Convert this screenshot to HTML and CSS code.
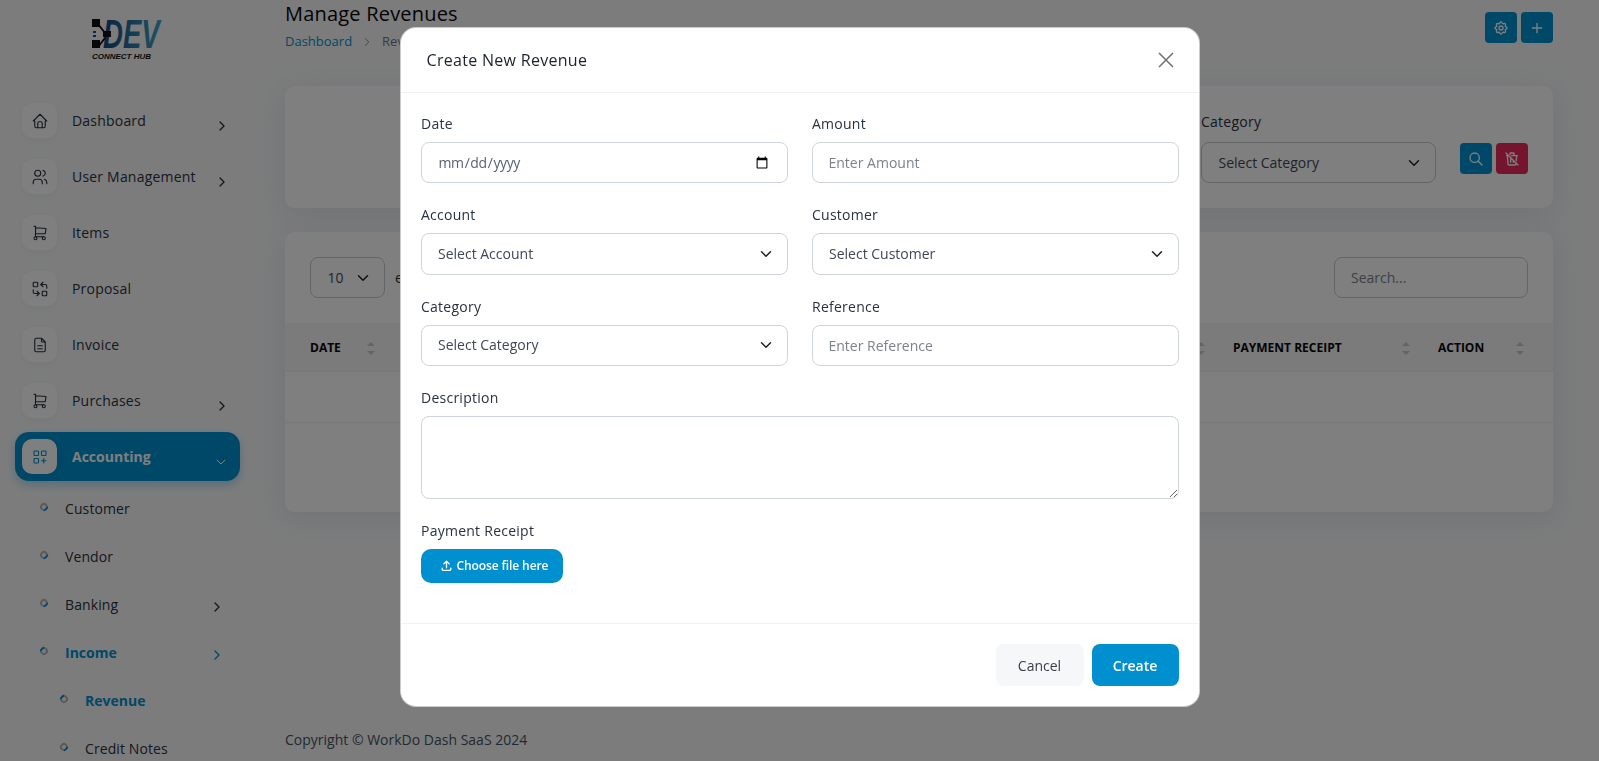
FILE: index.html
```html
<!DOCTYPE html>
<html lang="en">
<head>
    <meta charset="UTF-8">
    <meta name="viewport" content="width=device-width, initial-scale=1.0">
    <title>Manage Revenues</title>
    <link rel="stylesheet" href="styles.css">
</head>
<body>
    <div class="app">
        <aside class="sidebar">
            <div class="logo">
                <svg width="84" height="54" viewBox="0 -8 84 54">
                    <defs>
                        <linearGradient id="logo-grad" x1="0" x2="1" y1="0" y2="0">
                            <stop offset="0" stop-color="#17467f" />
                            <stop offset="1" stop-color="#3fa7c9" />
                        </linearGradient>
                    </defs>
                    <text class="logo-mark" transform="translate(11 30) scale(0.69 1)" fill="url(#logo-grad)">DEV</text>
                    <path class="logo-link" d="M6 6l7 9M6 29l7 -9" />
                    <rect class="logo-block" x="0" y="1" width="8" height="8" />
                    <rect class="logo-block" x="0" y="22" width="8" height="8" />
                    <rect class="logo-block" x="11" y="13" width="8" height="6" />
                    <rect x="1" y="13" width="3" height="2" fill="#1c4f8a" />
                    <rect x="1" y="17" width="3" height="2" fill="#1c4f8a" />
                    <text class="logo-sub" x="0" y="41" textLength="59" lengthAdjust="spacingAndGlyphs">CONNECT HUB</text>
                </svg>
            </div>
            <nav class="menu">
                <a class="menu-item">
                    <span class="tile"><svg class="icon" viewBox="0 0 24 24"><path d="M5 12l-2 0l9 -9l9 9l-2 0M5 12v7a2 2 0 0 0 2 2h10a2 2 0 0 0 2 -2v-7M9 21v-6a2 2 0 0 1 2 -2h2a2 2 0 0 1 2 2v6" /></svg></span>
                    <span class="menu-text">Dashboard</span>
                    <svg class="chev" viewBox="0 0 24 24"><path d="M9 6l6 6l-6 6" /></svg>
                </a>
                <a class="menu-item">
                    <span class="tile"><svg class="icon" viewBox="0 0 24 24"><circle cx="9" cy="7" r="4" /><path d="M3 21v-2a4 4 0 0 1 4 -4h4a4 4 0 0 1 4 4v2M16 3.13a4 4 0 0 1 0 7.75M21 21v-2a4 4 0 0 0 -3 -3.85" /></svg></span>
                    <span class="menu-text">User Management</span>
                    <svg class="chev" viewBox="0 0 24 24"><path d="M9 6l6 6l-6 6" /></svg>
                </a>
                <a class="menu-item">
                    <span class="tile"><svg class="icon" viewBox="0 0 24 24"><circle cx="6" cy="19" r="2" /><circle cx="17" cy="19" r="2" /><path d="M17 17h-11v-14h-2M6 5l14 1l-1 7h-13" /></svg></span>
                    <span class="menu-text">Items</span>
                </a>
                <a class="menu-item">
                    <span class="tile"><svg class="icon" viewBox="0 0 24 24"><rect x="3" y="3" width="6" height="6" rx="1" /><rect x="15" y="15" width="6" height="6" rx="1" /><path d="M21 11v-3a2 2 0 0 0 -2 -2h-6l3 3m0 -6l-3 3M3 13v3a2 2 0 0 0 2 2h6l-3 -3m0 6l3 -3" /></svg></span>
                    <span class="menu-text">Proposal</span>
                </a>
                <a class="menu-item">
                    <span class="tile"><svg class="icon" viewBox="0 0 24 24"><path d="M14 3v4a1 1 0 0 0 1 1h4M17 21h-10a2 2 0 0 1 -2 -2v-14a2 2 0 0 1 2 -2h7l5 5v11a2 2 0 0 1 -2 2zM9 13h6M9 17h6" /></svg></span>
                    <span class="menu-text">Invoice</span>
                </a>
                <a class="menu-item">
                    <span class="tile"><svg class="icon" viewBox="0 0 24 24"><circle cx="6" cy="19" r="2" /><circle cx="17" cy="19" r="2" /><path d="M17 17h-11v-14h-2M6 5l14 1l-1 7h-13" /></svg></span>
                    <span class="menu-text">Purchases</span>
                    <svg class="chev" viewBox="0 0 24 24"><path d="M9 6l6 6l-6 6" /></svg>
                </a>
                <a class="menu-item active">
                    <span class="tile"><svg class="icon" viewBox="0 0 24 24"><rect x="4" y="4" width="6" height="6" rx="1" /><rect x="14" y="4" width="6" height="6" rx="1" /><rect x="4" y="14" width="6" height="6" rx="1" /><path d="M14 17h6m-3 -3v6" /></svg></span>
                    <span class="menu-text">Accounting</span>
                    <svg class="chev" viewBox="0 0 24 24"><path d="M6 9l6 6l6 -6" /></svg>
                </a>
            </nav>
            <ul class="submenu">
                <li class="sub-item"><span class="dot"></span>Customer</li>
                <li class="sub-item"><span class="dot"></span>Vendor</li>
                <li class="sub-item"><span class="dot"></span>Banking<svg class="chev" viewBox="0 0 24 24"><path d="M9 6l6 6l-6 6" /></svg></li>
                <li class="sub-item current"><span class="dot"></span>Income<svg class="chev" viewBox="0 0 24 24"><path d="M9 6l6 6l-6 6" /></svg></li>
                <li class="sub-item nested current"><span class="dot"></span>Revenue</li>
                <li class="sub-item nested"><span class="dot"></span>Credit Notes</li>
            </ul>
        </aside>

        <main class="content">
            <header class="page-head">
                <div>
                    <h1 class="page-title">Manage Revenues</h1>
                    <div class="crumbs">
                        <a class="crumb-link">Dashboard</a>
                        <svg class="crumb-sep" viewBox="0 0 24 24"><path d="M9 6l6 6l-6 6" /></svg>
                        <span>Revenue</span>
                    </div>
                </div>
                <div class="head-actions">
                    <button class="btn-sm primary"><svg class="icon" viewBox="0 0 24 24"><path d="M10.325 4.317c.426 -1.756 2.924 -1.756 3.35 0a1.724 1.724 0 0 0 2.573 1.066c1.543 -.94 3.31 .826 2.37 2.37a1.724 1.724 0 0 0 1.065 2.572c1.756 .426 1.756 2.924 0 3.35a1.724 1.724 0 0 0 -1.066 2.573c.94 1.543 -.826 3.31 -2.37 2.37a1.724 1.724 0 0 0 -2.572 1.065c-.426 1.756 -2.924 1.756 -3.35 0a1.724 1.724 0 0 0 -2.573 -1.066c-1.543 .94 -3.31 -.826 -2.37 -2.37a1.724 1.724 0 0 0 -1.065 -2.572c-1.756 -.426 -1.756 -2.924 0 -3.35a1.724 1.724 0 0 0 1.066 -2.573c-.94 -1.543 .826 -3.31 2.37 -2.37c1 .608 2.296 .07 2.572 -1.065z" /><circle cx="12" cy="12" r="3" /></svg></button>
                    <button class="btn-sm primary"><svg class="icon" viewBox="0 0 24 24"><path d="M12 5v14M5 12h14" /></svg></button>
                </div>
            </header>

            <section class="card filter-card">
                <div class="field filter-field">
                    <label class="filter-label">Category</label>
                    <select class="control dim-control"><option>Select Category</option></select>
                </div>
                <div class="filter-actions">
                    <button class="btn-sm primary"><svg class="icon" viewBox="0 0 24 24"><circle cx="10" cy="10" r="7" /><path d="M21 21l-6 -6" /></svg></button>
                    <button class="btn-sm danger"><svg class="icon" viewBox="0 0 24 24"><path d="M3 3l18 18M4 7h3m4 0h9M10 11l0 6M14 14l0 3M5 7l1 12a2 2 0 0 0 2 2h8a2 2 0 0 0 2 -2l.077 -.923M18.384 14.373l.616 -7.373M9 5v-1a1 1 0 0 1 1 -1h4a1 1 0 0 1 1 1v3" /></svg></button>
                </div>
            </section>

            <section class="card table-card">
                <div class="table-top">
                    <div class="per-page">
                        <select class="control dim-control per-select"><option>10</option></select>
                        <span class="per-text">entries per page</span>
                    </div>
                    <input class="control dim-control search" placeholder="Search...">
                </div>
                <table class="data-table">
                    <thead>
                        <tr>
                            <th class="col-date"><div class="th-in">Date<span class="sort"></span></div></th>
                            <th><div class="th-in">Amount<span class="sort"></span></div></th>
                            <th><div class="th-in">Account<span class="sort"></span></div></th>
                            <th><div class="th-in">Customer<span class="sort"></span></div></th>
                            <th><div class="th-in">Category<span class="sort"></span></div></th>
                            <th><div class="th-in">Reference<span class="sort"></span></div></th>
                            <th><div class="th-in">Description<span class="sort"></span></div></th>
                            <th class="col-receipt"><div class="th-in">Payment Receipt<span class="sort"></span></div></th>
                            <th class="col-action"><div class="th-in">Action<span class="sort"></span></div></th>
                        </tr>
                    </thead>
                    <tbody>
                        <tr><td colspan="9">No entries found</td></tr>
                    </tbody>
                </table>
            </section>

            <footer class="copyright">Copyright © WorkDo Dash SaaS 2024</footer>
        </main>
    </div>

    <div class="backdrop">
        <div class="modal">
            <div class="modal-head">
                <h5 class="modal-title">Create New Revenue</h5>
                <svg class="close" viewBox="0 0 16 16"><path d="M1 1l14 14M15 1l-14 14" /></svg>
            </div>
            <div class="modal-body">
                <div class="field">
                    <label>Date</label>
                    <input class="control date" type="date">
                </div>
                <div class="field">
                    <label>Amount</label>
                    <input class="control" placeholder="Enter Amount">
                </div>
                <div class="field">
                    <label>Account</label>
                    <select class="control"><option>Select Account</option></select>
                </div>
                <div class="field">
                    <label>Customer</label>
                    <select class="control"><option>Select Customer</option></select>
                </div>
                <div class="field">
                    <label>Category</label>
                    <select class="control"><option>Select Category</option></select>
                </div>
                <div class="field">
                    <label>Reference</label>
                    <input class="control" placeholder="Enter Reference">
                </div>
                <div class="field wide">
                    <label>Description</label>
                    <textarea class="control area"></textarea>
                </div>
                <div class="field wide">
                    <label>Payment Receipt</label>
                    <button class="upload">
                        <svg class="upload-icon" viewBox="0 0 24 24"><path d="M4 17v2a2 2 0 0 0 2 2h12a2 2 0 0 0 2 -2v-2M7 9l5 -5l5 5M12 4v12" /></svg>
                        Choose file here
                    </button>
                </div>
            </div>
            <div class="modal-foot">
                <button class="btn btn-light">Cancel</button>
                <button class="btn btn-primary">Create</button>
            </div>
        </div>
    </div>
</body>
</html>
```

FILE: styles.css
```css
* {
    box-sizing: border-box;
}
body {
    margin: 0;
    height: 761px;
    overflow: hidden;
    font-family: 'Open Sans', sans-serif;
    font-size: 14px;
    line-height: 21px;
    color: #293240;
    background: #f8f9fa;
}
.app {
    display: flex;
    height: 761px;
}
svg {
    fill: none;
    stroke: currentColor;
    stroke-width: 1.5;
    stroke-linecap: round;
    stroke-linejoin: round;
}
.icon {
    width: 18px;
    height: 18px;
}

/* sidebar */
.sidebar {
    width: 255px;
    flex-shrink: 0;
    overflow: hidden;
}
.logo {
    height: 96px;
    padding: 10px 0 0 92px;
}
.logo svg {
    stroke: none;
    display: block;
}
.logo-mark {
    font-family: 'Liberation Sans', sans-serif;
    font-style: italic;
    font-weight: 700;
    font-size: 40px;
}
.logo-block {
    fill: #111;
}
.logo-link {
    stroke: #111;
    stroke-width: 2;
}
.logo-sub {
    font-family: 'Liberation Sans', sans-serif;
    font-style: italic;
    font-weight: 700;
    font-size: 8px;
    fill: #111;
}
.menu {
    display: flex;
    flex-direction: column;
    gap: 7px;
    margin-left: 15px;
    width: 225px;
}
.menu-item {
    display: flex;
    align-items: center;
    height: 49px;
    padding: 0 7px;
    gap: 15px;
    border-radius: 14px;
    font-weight: 500;
    letter-spacing: 0.2px;
    color: #293240;
}
.tile {
    width: 35px;
    height: 35px;
    flex-shrink: 0;
    display: flex;
    align-items: center;
    justify-content: center;
    background: #fff;
    border-radius: 10px;
    box-shadow: 0 2px 8px rgba(0, 0, 0, 0.05);
}
.menu-text {
    flex: 1;
}
.chev {
    width: 16px;
    height: 16px;
    margin: 10px 3px 0 0;
    stroke-width: 2;
}
.menu-item.active {
    background: #0090cf;
    color: #fff;
    font-weight: 700;
    letter-spacing: 0;
    box-shadow: 0 4px 10px rgba(0, 144, 207, 0.3);
}
.menu-item.active .tile {
    color: #0090cf;
}
.menu-item.active .chev {
    stroke-width: 1.5;
    margin-right: 4px;
}
.submenu {
    list-style: none;
    margin: 3px 0 0;
    padding: 0;
}
.sub-item {
    display: flex;
    align-items: center;
    height: 48px;
    padding: 0 30px 0 40px;
    gap: 17px;
    letter-spacing: 0.1px;
}
.sub-item .chev {
    margin: 6px 0 0 auto;
}
.sub-item.nested {
    padding-left: 60px;
}
.sub-item.current {
    color: #0090cf;
    font-weight: 700;
    letter-spacing: 0;
}
.dot {
    width: 8px;
    height: 8px;
    margin-top: -2px;
    border: 2px solid #aab6c0;
    border-right-color: #0090cf;
    border-radius: 50%;
    transform: rotate(45deg);
}
.current .dot {
    border-right-color: #aab6c0;
    border-left-color: #0090cf;
}

/* main column */
.content {
    flex: 1;
    min-width: 0;
    display: flex;
    flex-direction: column;
    padding: 0 46px 0 30px;
}
.page-head {
    display: flex;
    justify-content: space-between;
    height: 86px;
}
.page-title {
    margin: 0;
    font-size: 20px;
    line-height: 28px;
    font-weight: 500;
    letter-spacing: 0.2px;
    color: #060606;
}
.crumbs {
    display: flex;
    align-items: center;
    margin-top: 3px;
    color: #6f7782;
    font-size: 13px;
}
.crumb-link {
    color: #0090cf;
}
.crumb-sep {
    width: 14px;
    height: 14px;
    margin: 0 8px;
}
.head-actions {
    display: flex;
    gap: 4px;
    margin-top: 12px;
}
.btn-sm {
    width: 32px;
    height: 31px;
    padding: 0;
    border: 0;
    border-radius: 4px;
    color: #fff;
    display: flex;
    align-items: center;
    justify-content: center;
}
.btn-sm .icon {
    width: 16px;
    height: 16px;
    stroke-width: 2;
}
.primary {
    background: #0090cf;
}
.danger {
    background: #e8295f;
}
.card {
    background: #fff;
    border-radius: 10px;
    box-shadow: 0 6px 30px rgba(182, 186, 203, 0.3);
}
.filter-card {
    display: flex;
    justify-content: flex-end;
    align-items: flex-start;
    gap: 24px;
    height: 122px;
    padding: 25px 25px 0;
    margin-bottom: 24px;
}
.filter-field {
    width: 235px;
}
.filter-field .filter-label {
    font-weight: 400;
    padding-left: 0;
    margin-bottom: 10px;
}
.filter-actions {
    display: flex;
    gap: 4px;
    margin-top: 32px;
}
.table-card {
    height: 280px;
    overflow: hidden;
}
.table-top {
    display: flex;
    justify-content: space-between;
    padding: 25px;
}
.per-page {
    display: flex;
    align-items: center;
    gap: 10px;
}
.per-text {
    white-space: nowrap;
}
.data-table {
    width: 100%;
    border-collapse: collapse;
    table-layout: fixed;
}
.data-table th {
    height: 48px;
    padding: 0 3px 0 25px;
    background: #f6f6f7;
    font-size: 12px;
    font-weight: 700;
    text-align: left;
    text-transform: uppercase;
    color: #060606;
    white-space: nowrap;
    overflow: hidden;
}
.data-table td {
    height: 51px;
    border-top: 1px solid #f1f1f4;
    border-bottom: 1px solid #f1f1f4;
    text-align: center;
}
.col-date {
    width: 93px;
}
.col-receipt {
    width: 205px;
}
.col-action {
    width: 140px;
}
.data-table .col-action {
    padding-right: 29px;
}
.th-in {
    display: flex;
    justify-content: space-between;
    align-items: center;
}
.sort {
    position: relative;
    width: 8px;
    height: 13px;
    margin-top: 3px;
    flex-shrink: 0;
}
.sort::before,
.sort::after {
    content: "";
    position: absolute;
    left: 0;
    border-left: 4px solid transparent;
    border-right: 4px solid transparent;
}
.sort::before {
    top: 0;
    border-bottom: 4px solid #c9c9c9;
}
.sort::after {
    bottom: 0;
    border-top: 4px solid #c9c9c9;
}
.copyright {
    margin-top: auto;
    padding-bottom: 11px;
    color: #4a525e;
}

/* form bits */
.field {
    display: flex;
    flex-direction: column;
    min-width: 0;
}
.field label {
    font-weight: 500;
    letter-spacing: 0.25px;
    padding-left: 0.5px;
    margin-bottom: 8px;
}
.control {
    width: 100%;
    height: 41.2px;
    padding: 0 16px;
    border: 1px solid #ced4da;
    border-radius: 8px;
    background-color: #fff;
    font: 400 14px/21px 'Open Sans', sans-serif;
    color: #3f4755;
    outline: none;
}
.control::placeholder {
    color: #7c838c;
}
select.control {
    appearance: none;
    height: 41.4px;
    padding: 0 16px 1px 16.5px;
    background-image: url("data:image/svg+xml,%3Csvg xmlns='http://www.w3.org/2000/svg' viewBox='0 0 16 16'%3E%3Cpath fill='none' stroke='%23222' stroke-linecap='round' stroke-linejoin='round' stroke-width='2' d='M2 5l6 6 6-6'/%3E%3C/svg%3E");
    background-repeat: no-repeat;
    background-position: right 15px center;
    background-size: 12px 12px;
}
.date {
    color: #5a6270;
    letter-spacing: -0.4px;
}
.dim-control {
    border-color: #c6cad0;
}
.per-page .per-select {
    width: 75px;
}
.table-top .search {
    width: 194px;
}
.area {
    height: 82.6px;
    padding: 8px 16px;
    display: block;
}

/* modal */
.backdrop {
    position: fixed;
    inset: 0;
    display: flex;
    justify-content: center;
    align-items: flex-start;
    background: rgba(0, 0, 0, 0.5);
}
.modal {
    width: 800px;
    margin-top: 27px;
    background: #fff;
    border: 1px solid rgba(0, 0, 0, 0.2);
    border-radius: 16px;
}
.modal-head {
    display: flex;
    justify-content: space-between;
    align-items: center;
    height: 65px;
    padding: 0 25px 0 26px;
    border-bottom: 1px solid #f1f1f4;
}
.modal-title {
    margin: 0;
    font-size: 16px;
    font-weight: 500;
    letter-spacing: 0.3px;
    color: #1d232c;
}
.close {
    width: 16px;
    height: 16px;
    color: #6e7074;
    stroke-linecap: butt;
}
.modal-body {
    display: grid;
    grid-template-columns: 1fr 1fr;
    column-gap: 24px;
    row-gap: 21px;
    padding: 20px 20px 0;
    height: 530px;
    align-content: start;
}
.wide {
    grid-column: 1 / -1;
}
.upload {
    align-self: flex-start;
    display: flex;
    align-items: center;
    gap: 4px;
    width: 142px;
    height: 34px;
    padding: 0 0 0 19px;
    border: 0;
    border-radius: 10px;
    background: #0090cf;
    color: #fff;
    font: 600 12px 'Open Sans', sans-serif;
    letter-spacing: -0.1px;
}
.upload-icon {
    width: 13px;
    height: 13px;
    stroke-width: 2.5;
}
.modal-foot {
    display: flex;
    justify-content: flex-end;
    gap: 8px;
    height: 83px;
    padding: 20px 20px 0;
    border-top: 1px solid #f1f1f4;
}
.btn {
    height: 42px;
    border: 0;
    border-radius: 8px;
    font: 600 14px 'Open Sans', sans-serif;
}
.btn-light {
    width: 88px;
    background: #f6f7f9;
    color: #3a3f46;
    font-weight: 500;
}
.btn-primary {
    width: 87px;
    background: #0090cf;
    color: #fff;
}
```
